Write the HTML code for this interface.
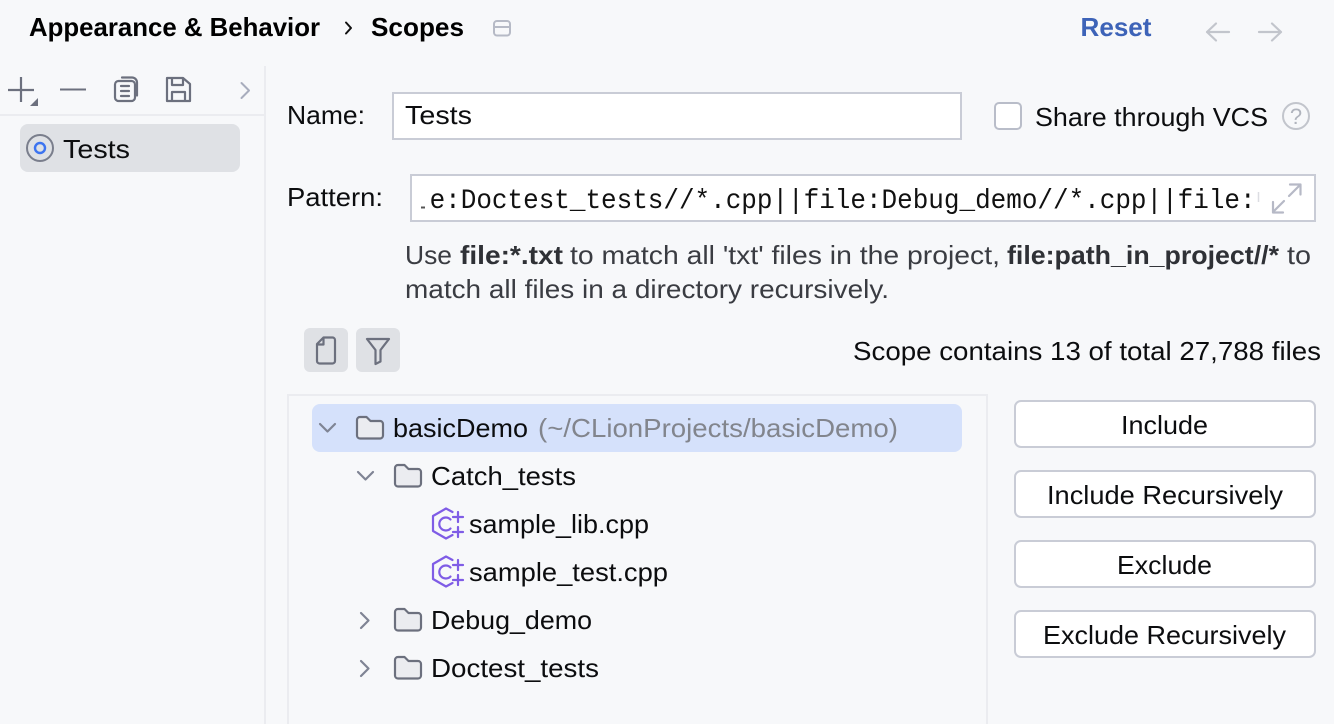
<!DOCTYPE html>
<html>
<head>
<meta charset="utf-8">
<style>
html,body{margin:0;padding:0;background:#f7f8fa;width:1334px;height:724px;overflow:hidden}
svg{display:block}
text{font-family:"Liberation Sans",sans-serif;font-size:26px;fill:#0c0d0f}
.b{font-weight:700;fill:#000}
.h{fill:#3a3c42}
.hb{fill:#2f3136;font-weight:700}
.m{font-family:"Liberation Mono",monospace;font-size:28px;fill:#111}
.i{fill:none;stroke:#6c707e;stroke-width:2.2;stroke-linecap:round;stroke-linejoin:round}
.f{fill:#ebecf0;stroke:#6c707e;stroke-width:2.2;stroke-linejoin:round}
.c{fill:none;stroke:#7f5ce6;stroke-width:2.2;stroke-linecap:round;stroke-linejoin:round}
.btn{fill:#fff;stroke:#c9ccd6;stroke-width:2}
</style>
</head>
<body>
<svg width="1334" height="724" viewBox="0 0 1334 724" xmlns="http://www.w3.org/2000/svg">
<defs>
<clipPath id="pc"><rect x="429" y="176" width="829" height="44"/></clipPath>
<g id="folder"><path class="f" d="M1 19.500V4a3 3 0 0 1 3-3h6.500l4 4H24a3 3 0 0 1 3 3v11.500a3 3 0 0 1-3 3H4a3 3 0 0 1-3-3z"/></g>
<g id="cpp">
<path class="c" d="M19.500 3 13 -0.500 0 7V22L13 29.500 19.500 26"/>
<path class="c" d="M17.500 10.500a6.500 6.500 0 1 0 0 9"/>
<path class="c" d="M20 8h10M25 3v10M20 23h10M25 18v10"/>
</g>
</defs>

<rect width="1334" height="724" fill="#f7f8fa"/>

<!-- header -->
<text class="b" x="29" y="36" textLength="291" lengthAdjust="spacingAndGlyphs">Appearance &amp; Behavior</text>
<path d="M346 22.500l5 5.500-5 5.500" fill="none" stroke="#111" stroke-width="2" stroke-linecap="round" stroke-linejoin="round"/>
<text class="b" x="371" y="36" textLength="93" lengthAdjust="spacingAndGlyphs">Scopes</text>
<rect x="494" y="21" width="16" height="14.500" rx="3" fill="none" stroke="#b6bac6" stroke-width="2"/>
<path d="M494 27h16" stroke="#b6bac6" stroke-width="2"/>
<text x="1080.500" y="36" textLength="71" lengthAdjust="spacingAndGlyphs" style="fill:#3d63b8;font-weight:700">Reset</text>
<path d="M1207 32h22M1216 23.500l-9 8.500 9 8.500" fill="none" stroke="#c2c5cc" stroke-width="2.200" stroke-linecap="round" stroke-linejoin="round"/>
<path d="M1259 32h22M1272 23.500l9 8.500-9 8.500" fill="none" stroke="#c2c5cc" stroke-width="2.200" stroke-linecap="round" stroke-linejoin="round"/>

<!-- left panel -->
<rect x="264" y="66" width="2" height="658" fill="#ebecf0"/>
<rect x="0" y="114" width="264" height="2" fill="#ebecf0"/>
<path class="i" d="M21 77v25M8 90h26" style="stroke-linecap:butt"/>
<path d="M38 98v8h-8z" fill="#6c707e"/>
<path class="i" d="M60 89.500h26" style="stroke-linecap:butt;stroke-width:2"/>
<rect x="115" y="81" width="20" height="20" rx="3.500" class="i"/>
<path class="i" d="M121 86h8M121 91h8M121 96h8M122 77.500h10a5 5 0 0 1 5 5v13"/>
<path class="i" d="M167 78h16l7 6v17h-23zM172 78v7h11v-7M172 101v-9h13v9"/>
<path d="M241.500 83l7.500 7.500-7.500 7.500" fill="none" stroke="#a8adbd" stroke-width="2" stroke-linecap="round" stroke-linejoin="round"/>
<rect x="20" y="124" width="220" height="48" rx="8" fill="#dfe1e5"/>
<circle cx="40" cy="148" r="13" fill="none" stroke="#7a7e8c" stroke-width="2"/>
<circle cx="40" cy="148" r="5" fill="none" stroke="#3d74f0" stroke-width="2.400"/>
<text x="63" y="158" textLength="67" lengthAdjust="spacingAndGlyphs">Tests</text>

<!-- name row -->
<text x="287" y="124" textLength="78" lengthAdjust="spacingAndGlyphs">Name:</text>
<rect x="393" y="93" width="568" height="46" fill="#fff" stroke="#c9ccd6" stroke-width="2"/>
<text x="405" y="124" textLength="67" lengthAdjust="spacingAndGlyphs">Tests</text>
<rect x="995" y="103" width="26" height="26" rx="4" fill="#fff" stroke="#b9bdc9" stroke-width="2"/>
<text x="1035" y="126" textLength="233" lengthAdjust="spacingAndGlyphs">Share through VCS</text>
<circle cx="1296" cy="116" r="13" fill="none" stroke="#c2c5cc" stroke-width="2"/>
<text x="1296" y="124" text-anchor="middle" style="font-size:22px;fill:#b0b4bd">?</text>

<!-- pattern row -->
<text x="287" y="206" textLength="96" lengthAdjust="spacingAndGlyphs">Pattern:</text>
<rect x="411" y="175" width="904" height="46" fill="#fff" stroke="#c9ccd6" stroke-width="2"/>
<path d="M421 207.500h4" stroke="#555" stroke-width="2"/>
<g clip-path="url(#pc)">
<text class="m" x="429.600" y="208" textLength="826" lengthAdjust="spacingAndGlyphs">e:Doctest_tests//*.cpp||file:Debug_demo//*.cpp||file:</text>
</g>
<path d="M1258.500 192v10" stroke="#dcdde2" stroke-width="1.500"/>
<path d="M1289 196l10.500-10.500M1290 184.500h10.500v10M1284 201l-10.500 10.500M1273 202v10.500h10" fill="none" stroke="#b6b9c6" stroke-width="2.200" stroke-linecap="round" stroke-linejoin="round"/>

<!-- help -->
<text class="h" x="405" y="264" textLength="47" lengthAdjust="spacingAndGlyphs">Use</text>
<text class="hb" x="460" y="264" textLength="103" lengthAdjust="spacingAndGlyphs">file:*.txt</text>
<text class="h" x="570" y="264" textLength="430" lengthAdjust="spacingAndGlyphs">to match all 'txt' files in the project,</text>
<text class="hb" x="1007" y="264" textLength="272" lengthAdjust="spacingAndGlyphs">file:path_in_project//*</text>
<text class="h" x="1287" y="264" textLength="24" lengthAdjust="spacingAndGlyphs">to</text>
<text class="h" x="405" y="298" textLength="484" lengthAdjust="spacingAndGlyphs">match all files in a directory recursively.</text>

<!-- tool buttons -->
<rect x="304" y="328" width="44" height="44" rx="6" fill="#dfe1e5"/>
<path class="i" d="M323.500 337.500h9a2.500 2.500 0 0 1 2.500 2.500v21a2.500 2.500 0 0 1-2.500 2.500h-13a2.500 2.500 0 0 1-2.500-2.500v-17zM317 344.500h6.500v-7"/>
<rect x="356" y="328" width="44" height="44" rx="6" fill="#dfe1e5"/>
<path class="i" d="M367 339h22l-8.500 11v11.500l-5 2.500v-14z"/>
<text x="853" y="360" textLength="468" lengthAdjust="spacingAndGlyphs">Scope contains 13 of total 27,788 files</text>

<!-- tree -->
<path d="M288 724V395h699v329" fill="none" stroke="#ebecf0" stroke-width="2"/>
<rect x="312" y="404" width="650" height="48" rx="8" fill="#d5e1fb"/>
<path d="M320 424l7.500 7.500 7.500-7.500" fill="none" stroke="#7f8494" stroke-width="2.200" stroke-linecap="round" stroke-linejoin="round"/>
<use href="#folder" x="356" y="416"/>
<text x="393" y="437" textLength="135" lengthAdjust="spacingAndGlyphs">basicDemo</text>
<text x="538" y="437" textLength="360" lengthAdjust="spacingAndGlyphs" style="fill:#82858d">(~/CLionProjects/basicDemo)</text>

<path d="M358 472l7.500 7.500 7.500-7.500" fill="none" stroke="#7f8494" stroke-width="2.200" stroke-linecap="round" stroke-linejoin="round"/>
<use href="#folder" x="394" y="464"/>
<text x="431" y="485" textLength="145" lengthAdjust="spacingAndGlyphs">Catch_tests</text>

<use href="#cpp" x="433" y="509"/>
<text x="469" y="533" textLength="180" lengthAdjust="spacingAndGlyphs">sample_lib.cpp</text>
<use href="#cpp" x="433" y="557"/>
<text x="469" y="581" textLength="199" lengthAdjust="spacingAndGlyphs">sample_test.cpp</text>

<path d="M361 613l7.500 7.500-7.500 7.500" fill="none" stroke="#7f8494" stroke-width="2.200" stroke-linecap="round" stroke-linejoin="round"/>
<use href="#folder" x="394" y="608"/>
<text x="431" y="629" textLength="161" lengthAdjust="spacingAndGlyphs">Debug_demo</text>

<path d="M361 661l7.500 7.500-7.500 7.500" fill="none" stroke="#7f8494" stroke-width="2.200" stroke-linecap="round" stroke-linejoin="round"/>
<use href="#folder" x="394" y="656"/>
<text x="431" y="677" textLength="168" lengthAdjust="spacingAndGlyphs">Doctest_tests</text>

<!-- buttons -->
<rect class="btn" x="1015" y="401" width="300" height="46" rx="6"/>
<text x="1121" y="434" textLength="87" lengthAdjust="spacingAndGlyphs">Include</text>
<rect class="btn" x="1015" y="471" width="300" height="46" rx="6"/>
<text x="1047" y="504" textLength="236" lengthAdjust="spacingAndGlyphs">Include Recursively</text>
<rect class="btn" x="1015" y="541" width="300" height="46" rx="6"/>
<text x="1117" y="574" textLength="95" lengthAdjust="spacingAndGlyphs">Exclude</text>
<rect class="btn" x="1015" y="611" width="300" height="46" rx="6"/>
<text x="1043" y="644" textLength="243" lengthAdjust="spacingAndGlyphs">Exclude Recursively</text>
</svg>
</body>
</html>
